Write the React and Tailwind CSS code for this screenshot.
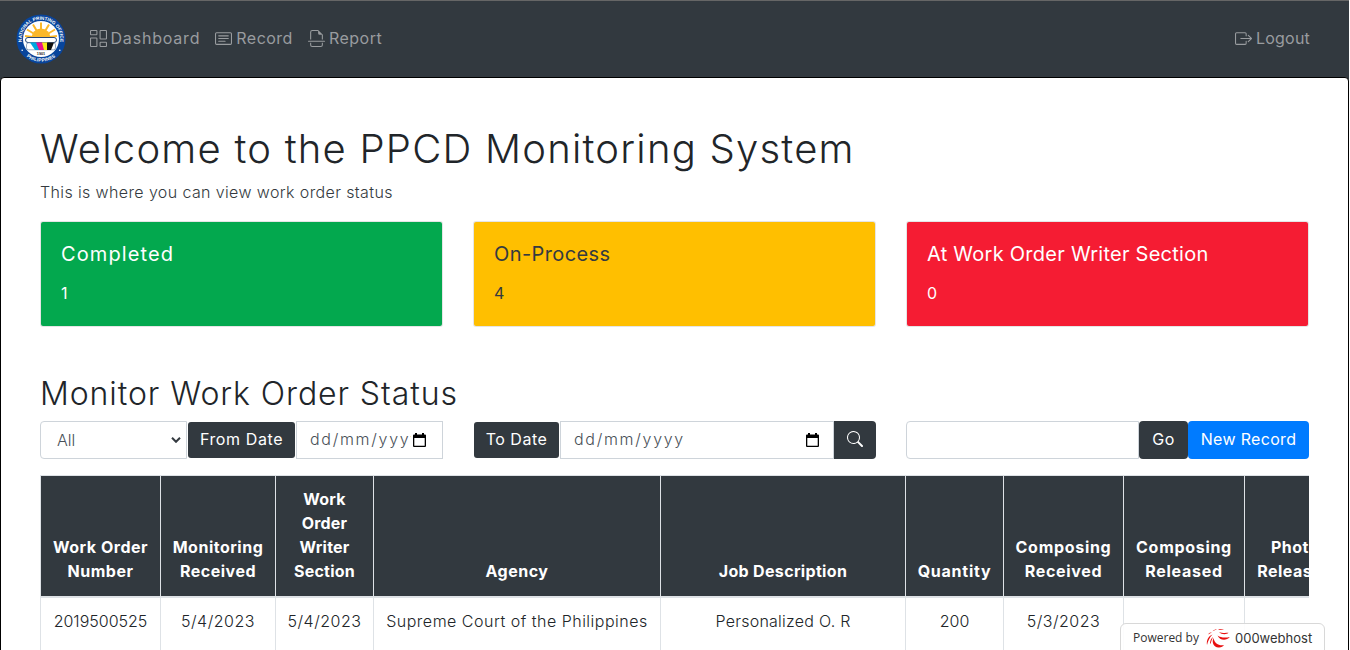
import React from "react";
import {
  BsColumnsGap,
  BsCardText,
  BsFileEarmarkBreak,
  BsBoxArrowRight,
  BsSearch,
} from "react-icons/bs";

const columns = [
  { w: "w-[120px]", head: "tracking-[0.5px]", body: "tracking-normal", lines: ["Work Order", "Number"], value: "2019500525" },
  { w: "w-[115px]", head: "tracking-[0.5px]", body: "tracking-[0.5px]", lines: ["Monitoring", "Received"], value: "5/4/2023" },
  { w: "w-[98px]", head: "tracking-[0.2px]", body: "tracking-[0.5px]", lines: ["Work", "Order", "Writer", "Section"], value: "5/4/2023" },
  { w: "w-[287px]", head: "tracking-[0.5px]", body: "tracking-[0.5px]", lines: ["Agency"], value: "Supreme Court of the Philippines" },
  { w: "w-[245px]", head: "tracking-[0.33px]", body: "tracking-[0.25px]", lines: ["Job Description"], value: "Personalized O. R" },
  { w: "w-[98px]", head: "tracking-[0.75px]", body: "tracking-normal", lines: ["Quantity"], value: "200" },
  { w: "w-[120px]", head: "tracking-[0.7px]", body: "tracking-[0.5px]", lines: ["Composing", "Received"], value: "5/3/2023" },
  { w: "w-[121px]", head: "tracking-[0.7px]", body: "tracking-normal", lines: ["Composing", "Released"], value: "" },
  { w: "w-[101px]", head: "tracking-[0.5px]", body: "tracking-normal", lines: ["Photo", "Released"], value: "" },
];

const cards = [
  { title: "Completed", spacing: "tracking-[1.1px]", value: "1", style: "bg-[#03a84e] text-white" },
  { title: "On-Process", spacing: "tracking-[0.4px]", value: "4", style: "bg-[#ffbf00] text-[#343a40]" },
  { title: "At Work Order Writer Section", spacing: "tracking-[0.26px]", value: "0", style: "bg-[#f51c33] text-white" },
];

function Seal() {
  return (
    <svg className="size-[50px] shrink-0" viewBox="0 0 50 50">
      <defs>
        <path id="sealTop" d="M8 34.200 A19.300 19.300 0 1 1 42 34.200" />
        <path id="sealBottom" d="M6 37.400 A22.700 22.700 0 0 0 44 37.400" />
      </defs>
      <circle cx="25" cy="25" r="24.5" fill="#08459c" />
      <circle cx="25" cy="25" r="18" fill="#fff" />
      <path d="M25 24V8.500M25 24L17 10.500M25 24L33 10.500M25 24L11 15.500M25 24L39 15.500M25 24L9 22M25 24L41 22" stroke="#fbb829" strokeWidth="2" />
      <path d="M15.500 24a9.500 9.500 0 0 1 19 0z" fill="#fbb829" />
      <rect x="9.500" y="23.5" width="31" height="5" rx="2.5" fill="#fff" stroke="#12366e" strokeWidth=".9" />
      <rect x="10.500" y="28.800" width="29" height="7" rx="2" fill="#fff" stroke="#547199" strokeWidth=".6" />
      <path d="M14 28.500h8l3 7.500h-6z" fill="#00a7df" />
      <path d="M20 28.500h7l2 7.500h-6z" fill="#ec138c" />
      <path d="M26 28.500h6v7.500h-4z" fill="#f7e817" />
      <path d="M31 28.500h7l-3 7.500h-4z" fill="#111" />
      <text x="25" y="40.5" textAnchor="middle" fontFamily="Liberation Sans" fontSize="3.8" fontWeight="700" fill="#222">1901</text>
      <g fontFamily="Liberation Sans" fontSize="4.7" fontWeight="700" fill="#fff" textAnchor="middle">
        <text><textPath href="#sealTop" startOffset="50%">NATIONAL PRINTING OFFICE</textPath></text>
        <text letterSpacing=".2"><textPath href="#sealBottom" startOffset="50%">PHILIPPINES</textPath></text>
      </g>
      <circle cx="6.2" cy="36.2" r=".8" fill="#fff" />
      <circle cx="43.8" cy="36.2" r=".8" fill="#fff" />
    </svg>
  );
}

function CalendarIcon() {
  return (
    <svg className="h-[14px] w-[13px] shrink-0" viewBox="0 0 13 14">
      <path fill="#000" fillRule="evenodd" d="M2 0h2v1.500h5V0h2v1.500h1q1 0 1 1V13q0 1-1 1H1q-1 0-1-1V2.500q0-1 1-1h1zM1.300 5v7.700h10.400V5z" />
    </svg>
  );
}

function HostLogo() {
  return (
    <svg className="h-5 w-6 shrink-0" viewBox="0 0 24 20" fill="#e80f0f">
      <path d="M1 17C.2 12 2.500 8 6.500 6.500 3.500 9.500 2 13 1 17z" />
      <path d="M7.500 10c-2 4.500 0 9 5 9.500 2.500.2 4.500-.8 5.500-2.500-4.500 1-9.500-1-10.500-7z" />
      <path d="M11.500 7.500c2 4.700 8.500 6 12.300 1.500-4 .8-9 1-12.300-1.500z" />
      <path d="M13 4c2.500 2.600 7 3 9.500.8-3 .2-6.500.5-9.500-.8z" />
      <path d="M12 1.500c2-.8 4.500-.6 6 .3-2-.1-4 .2-6-.3zM6.500 3.200C8.200 1.500 10 1.200 11 1.300 9.200 2 8.200 2.800 6.500 3.200zM2 6.500C3 5 4.500 4.300 6 4.300 4.500 5.200 3.500 5.800 2 6.500z" />
      <path d="M4 15c.3-3 1.500-5 3-6C6 11.500 5.200 13 4.600 16z" />
    </svg>
  );
}

function NavItem({ icon: Icon, label, spacing }) {
  return (
    <a className="flex items-center gap-1">
      <Icon className="size-[17px] shrink-0" />
      <span className={spacing}>{label}</span>
    </a>
  );
}

export default function App() {
  return (
    <div className="relative h-[650px] w-[1350px] overflow-hidden bg-white font-['Inter',sans-serif] text-base font-light text-[#212529]">
      <header className="flex h-[77px] w-[1349px] items-center border-t border-[#666] bg-[#32393f] pr-[39px] pl-4 font-normal text-[#999c9f]">
        <Seal />
        <nav className="ml-[23.5px] flex gap-[15px] pb-0.5">
          <NavItem icon={BsColumnsGap} label="Dashboard" spacing="tracking-[0.8px]" />
          <NavItem icon={BsCardText} label="Record" spacing="tracking-[0.5px]" />
          <NavItem icon={BsFileEarmarkBreak} label="Report" spacing="tracking-[0.5px]" />
        </nav>
        <div className="ml-auto pb-0.5">
          <NavItem icon={BsBoxArrowRight} label="Logout" spacing="tracking-[0.2px]" />
        </div>
      </header>

      <div className="w-[1349px] bg-[#32393f]">
        <main className="h-[590px] rounded-t-[4px] border border-black bg-white pt-[47px] pl-[39px]">
          <h1 className="h-12 text-[40px] leading-[48px] tracking-[1.23px] whitespace-nowrap">Welcome to the PPCD Monitoring System</h1>
          <p className="mt-[7px] h-6 leading-6 tracking-[0.38px] text-[#343a40]">This is where you can view work order status</p>

          <section className="mt-[17px] flex w-[1269px] gap-[30px]">
            {cards.map((c) => (
              <div key={c.title} className={`h-[106px] w-[403px] shrink-0 rounded-[3px] border border-black/10 bg-clip-padding px-5 pt-5 ${c.style}`}>
                <h5 className={`text-xl leading-6 font-normal ${c.spacing}`}>{c.title}</h5>
                <p className="mt-[15px] leading-6 font-normal">{c.value}</p>
              </div>
            ))}
          </section>

          <h2 className="mt-12 h-[38px] text-[32px] leading-[38px] tracking-[0.92px]">Monitor Work Order Status</h2>

          <section className="mt-2 flex h-[38px] gap-[30px] font-normal">
            <div className="flex w-[403px]">
              <div className="flex w-[147px] items-center justify-between rounded-l-[4px] border border-[#ced4da] pr-[5px] pl-4 font-light text-[#495057]">
                All
                <svg className="h-[6px] w-[10px]" viewBox="0 0 10 6" fill="none" stroke="#343a40" strokeWidth="2"><path d="M1 .8l4 4 4-4" /></svg>
              </div>
              <button className="mx-px my-px w-[107px] rounded-[3px] bg-[#32393f] pb-0.5 tracking-[0.6px] text-white">From Date</button>
              <div className="flex flex-1 items-center border border-[#ced4da] pl-[13px] font-light text-[#495057]">
                <span className="w-[101px] overflow-hidden pb-0.5 whitespace-nowrap tracking-[1.7px]">dd/mm/yyyy</span>
                <span className="ml-[2px]"><CalendarIcon /></span>
              </div>
            </div>
            <div className="flex w-[403px]">
              <button className="mx-px my-px w-[85px] rounded-[3px] bg-[#32393f] pb-0.5 tracking-[0.5px] text-white">To Date</button>
              <div className="flex flex-1 items-center justify-between border border-[#ced4da] pr-[14px] pl-[13px] font-light text-[#495057]">
                <span className="pb-0.5 tracking-[1.7px]">dd/mm/yyyy</span>
                <CalendarIcon />
              </div>
              <button className="flex w-[42px] items-center justify-center rounded-r-[4px] bg-[#32393f] pb-0.5 text-white"><BsSearch className="size-4" /></button>
            </div>
            <div className="flex w-[403px]">
              <div className="flex-1 rounded-l-[4px] border border-[#ced4da]" />
              <button className="w-[49px] rounded-[4px] bg-[#32393f] pb-0.5 tracking-[0.6px] text-white">Go</button>
              <button className="w-[121px] rounded-[4px] bg-[#007bff] pb-0.5 tracking-[0.33px] text-white">New Record</button>
            </div>
          </section>

          <section className="mt-4 w-[1269px] overflow-hidden border-t border-[#dee2e6]">
            <div className="flex h-[122px] w-[1305px] border-b-2 border-[#dee2e6] bg-[#32393f] font-bold text-white">
              {columns.map((c, i) => (
                <div key={i} className={`flex shrink-0 flex-col justify-end border-l border-[#dee2e6] pb-[13px] text-center leading-6 ${c.w} ${c.head}`}>
                  {c.lines.map((l) => <div key={l} className="whitespace-nowrap">{l}</div>)}
                </div>
              ))}
            </div>
            <div className="flex h-20 w-[1305px]">
              {columns.map((c, i) => (
                <div key={i} className={`shrink-0 border-l border-[#dee2e6] pt-[11px] text-center leading-6 whitespace-nowrap ${c.w} ${c.body}`}>{c.value}</div>
              ))}
            </div>
          </section>
        </main>
      </div>

      <div className="absolute top-[623px] left-[1120px] flex h-10 w-[205px] rounded-[6px] border border-[#d8d8d8] bg-white/90 pt-1 pl-3 font-['Open_Sans',sans-serif] text-xs leading-5 font-normal text-[#333]">
        <span className="w-[67px] whitespace-nowrap">Powered by</span>
        <span className="ml-[6px]"><HostLogo /></span>
        <span className="ml-[5px] font-['Inter',sans-serif] text-[13px]">000webhost</span>
      </div>
    </div>
  );
}
